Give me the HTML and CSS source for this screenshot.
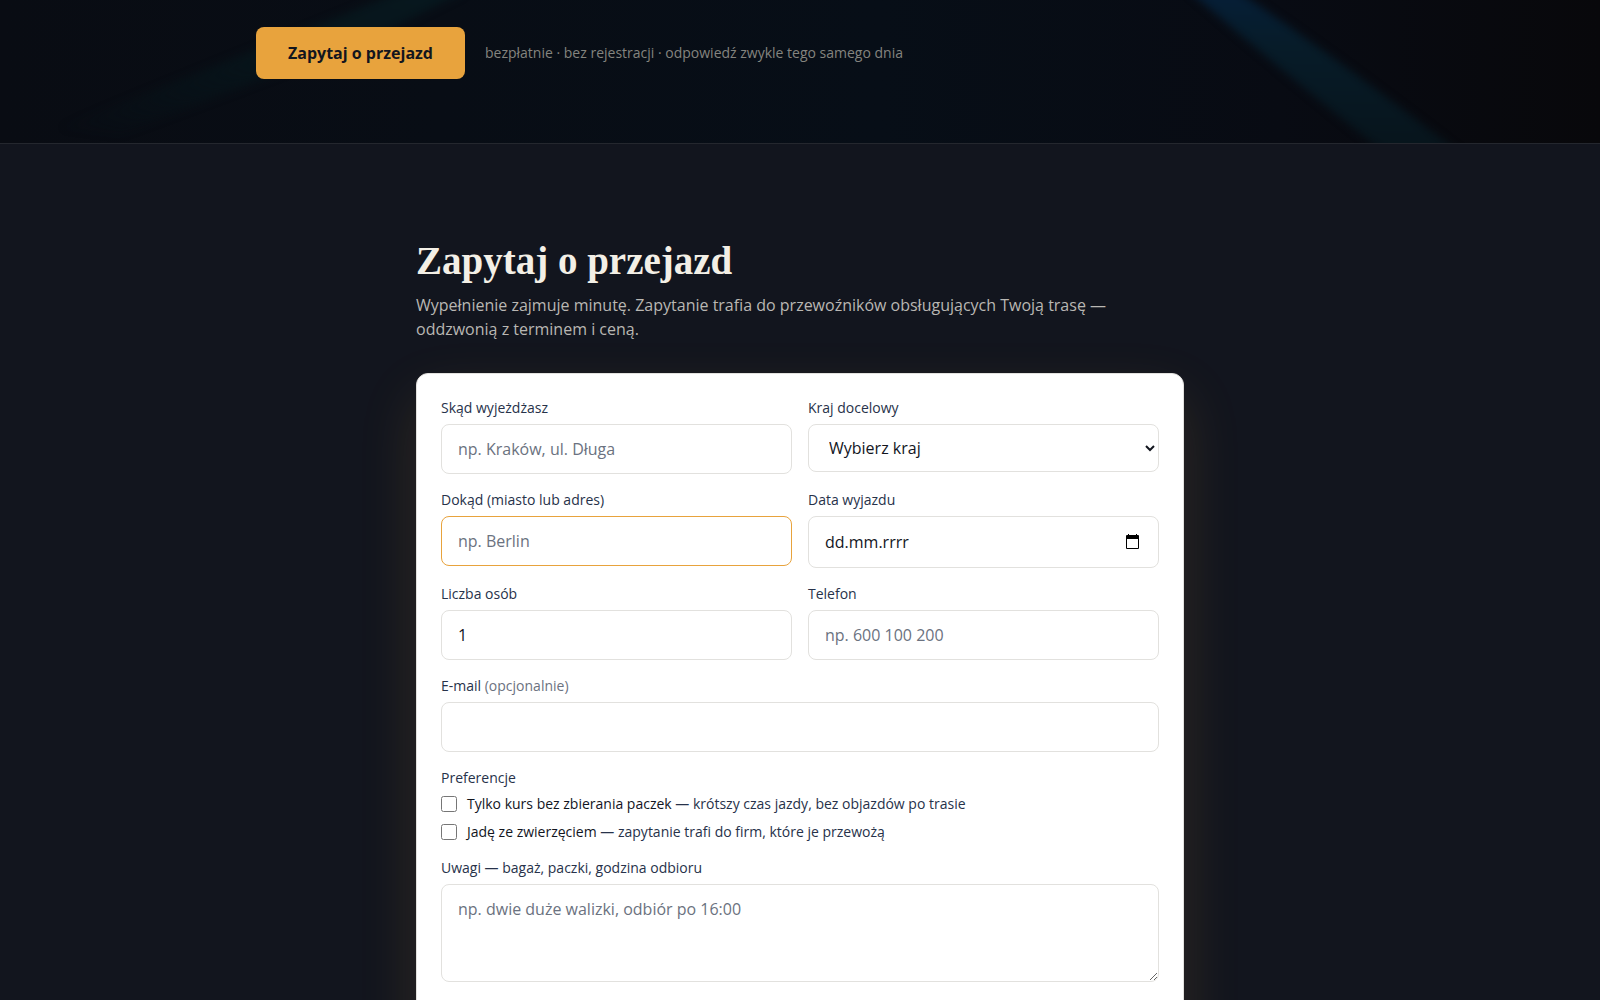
FILE: index.html
```html
<!DOCTYPE html>
<html lang="pl">
<head>
    <meta charset="UTF-8">
    <meta name="viewport" content="width=device-width, initial-scale=1.0">
    <title>Zapytaj o przejazd</title>
    <link rel="stylesheet" href="styles.css">
</head>
<body>
    <header class="hero">
        <svg class="hero-bg" viewBox="0 0 1600 143" preserveAspectRatio="none" aria-hidden="true">
            <defs>
                <linearGradient id="beam" x1="0" y1="0" x2="0" y2="1">
                    <stop offset="0" stop-color="#061f38"/>
                    <stop offset="0.35" stop-color="#071c29"/>
                    <stop offset="1" stop-color="#07141b"/>
                </linearGradient>
                <linearGradient id="beamLeft" x1="1" y1="0" x2="0" y2="1">
                    <stop offset="0" stop-color="#07181f"/>
                    <stop offset="0.5" stop-color="#07141a"/>
                    <stop offset="1" stop-color="#07141a" stop-opacity="0"/>
                </linearGradient>
                <filter id="soft" x="-20%" y="-20%" width="140%" height="140%" color-interpolation-filters="sRGB">
                    <feGaussianBlur stdDeviation="4"/>
                </filter>
            </defs>
            <path d="M1188 -10 H1236 Q1340 60 1460 153 H1385 Q1280 70 1188 -10Z" fill="url(#beam)" filter="url(#soft)"/>
            <path d="M470 -16 L400 -8 L60 128 L120 134 L380 34 L460 -6Z" fill="url(#beamLeft)" filter="url(#soft)"/>
        </svg>
        <div class="hero-inner">
            <a href="#zapytanie" class="primary-btn">Zapytaj o przejazd</a>
            <p class="hero-note">bezpłatnie · bez rejestracji · odpowiedź zwykle tego samego dnia</p>
        </div>
    </header>

    <main class="section" id="zapytanie">
        <h2 class="title">Zapytaj o przejazd</h2>
        <p class="lead">Wypełnienie zajmuje minutę. Zapytanie trafia do przewoźników obsługujących Twoją trasę — oddzwonią z terminem i ceną.</p>

        <form action="#" method="post" class="card">
            <div class="field">
                <label for="from">Skąd wyjeżdżasz</label>
                <input type="text" id="from" name="from" placeholder="np. Kraków, ul. Długa">
            </div>
            <div class="field">
                <label for="country">Kraj docelowy</label>
                <select id="country" name="country">
                    <option value="">Wybierz kraj</option>
                    <option>Niemcy</option>
                    <option>Holandia</option>
                    <option>Belgia</option>
                </select>
            </div>
            <div class="field">
                <label for="to">Dokąd (miasto lub adres)</label>
                <input type="text" id="to" name="to" class="active" placeholder="np. Berlin">
            </div>
            <div class="field">
                <label for="date">Data wyjazdu</label>
                <div class="date-box">
                    <input type="text" id="date" name="date" placeholder="dd.mm.rrrr">
                    <button type="button" class="date-btn" aria-label="Wybierz datę">
                        <svg width="13" height="15" viewBox="0 0 13 15" aria-hidden="true">
                            <path fill-rule="evenodd" d="M2 0h1v1h7V0h1v1h1q1 0 1 1v12q0 1-1 1H1q-1 0-1-1V2q0-1 1-1h1zM1 5v9h11V5z"/>
                        </svg>
                    </button>
                </div>
            </div>
            <div class="field">
                <label for="people">Liczba osób</label>
                <input type="number" id="people" name="people" min="1" value="1">
            </div>
            <div class="field">
                <label for="phone">Telefon</label>
                <input type="tel" id="phone" name="phone" placeholder="np. 600 100 200">
            </div>
            <div class="field wide">
                <label for="email">E-mail <span class="optional">(opcjonalnie)</span></label>
                <input type="email" id="email" name="email">
            </div>
            <fieldset class="prefs wide">
                <legend>Preferencje</legend>
                <label class="check" for="direct">
                    <input type="checkbox" id="direct" name="direct">
                    <span><span class="strong">Tylko kurs bez zbierania paczek</span> — krótszy czas jazdy, bez objazdów po trasie</span>
                </label>
                <label class="check" for="pet">
                    <input type="checkbox" id="pet" name="pet">
                    <span><span class="strong">Jadę ze zwierzęciem</span> — zapytanie trafi do firm, które je przewożą</span>
                </label>
            </fieldset>
            <div class="field wide">
                <label for="notes">Uwagi — bagaż, paczki, godzina odbioru</label>
                <textarea id="notes" name="notes" rows="3" placeholder="np. dwie duże walizki, odbiór po 16:00"></textarea>
            </div>
        </form>
    </main>
</body>
</html>
```

FILE: styles.css
```css
*{
    margin: 0;
    padding: 0;
    box-sizing: border-box;
}
body{
    background: #12151e;
    color: #f3efe6;
    font-family: "Open Sans", "Noto Sans", sans-serif;
    font-size: 16px;
    line-height: 24px;
    overflow-x: hidden;
}

/* hero */
.hero{
    position: relative;
    overflow: hidden;
    background: linear-gradient(90deg, #090c13 0%, #070e17 55%, #080b13 80%, #08080b 100%);
    border-bottom: 1px solid #24272e;
}
.hero-bg{
    position: absolute;
    inset: 0;
    width: 100%;
    height: 100%;
}
.hero-inner{
    position: relative;
    max-width: 1088px;
    margin: 0 auto;
    padding: 27px 0 64px;
    display: flex;
    align-items: center;
    gap: 20px;
}
.primary-btn{
    padding: 14px 32px;
    border-radius: 8px;
    background: #e8a33d;
    color: #12151e;
    font-weight: 700;
    text-decoration: none;
}
.hero-note{
    color: #84847f;
    font-size: 14px;
    line-height: 20px;
}

/* inquiry section */
.section{
    max-width: 768px;
    margin: 0 auto;
    padding: 97px 0;
}
.title{
    font-family: "Liberation Serif", serif;
    font-size: 39px;
    line-height: 40px;
    font-weight: 700;
}
.lead{
    max-width: 720px;
    margin-top: 12px;
    color: #b9b7b3;
}
.card{
    margin-top: 32px;
    padding: 24px 24px 96px;
    display: grid;
    grid-template-columns: 1fr 1fr;
    align-items: start;
    gap: 16px;
    background: #fff;
    border: 1px solid #e2e1de;
    border-radius: 12px;
    box-shadow: 0 24px 60px rgba(232, 173, 61, 0.14);
    color: #12151e;
}
.wide{
    grid-column: 1 / -1;
}
.field{
    display: flex;
    flex-direction: column;
    gap: 6px;
}
label, legend{
    color: #27324a;
    font-size: 14px;
    line-height: 20px;
}
.optional{
    color: #6b7280;
}
.field input, select, textarea{
    display: block;
    width: 100%;
    padding: 12px 16px;
    border: 1px solid #e2e1de;
    border-radius: 8px;
    background: #fff;
    color: #12151e;
    font: inherit;
}
.field input{
    height: 50px;
}
.field select{
    height: 48px;
    padding: 0 0 0 16px;
}
.field .active{
    border-color: #e8a33d;
}
textarea{
    resize: vertical;
}
::placeholder{
    color: #6b7280;
}
.date-box{
    position: relative;
}
.date-box input{
    height: 52px;
}
.date-box input::placeholder{
    color: #12151e;
}
.date-btn{
    position: absolute;
    top: 18px;
    right: 20px;
    width: 13px;
    height: 15px;
    border: 0;
    background: none;
}
.date-btn svg{
    display: block;
}

.prefs{
    border: 0;
    min-width: 0;
}
.check{
    display: flex;
    align-items: center;
    gap: 10px;
    margin-top: 8px;
}
.prefs legend + .check{
    margin-top: 6px;
}
.check input{
    width: 16px;
    height: 16px;
}
.strong{
    color: #12151e;
}
```
